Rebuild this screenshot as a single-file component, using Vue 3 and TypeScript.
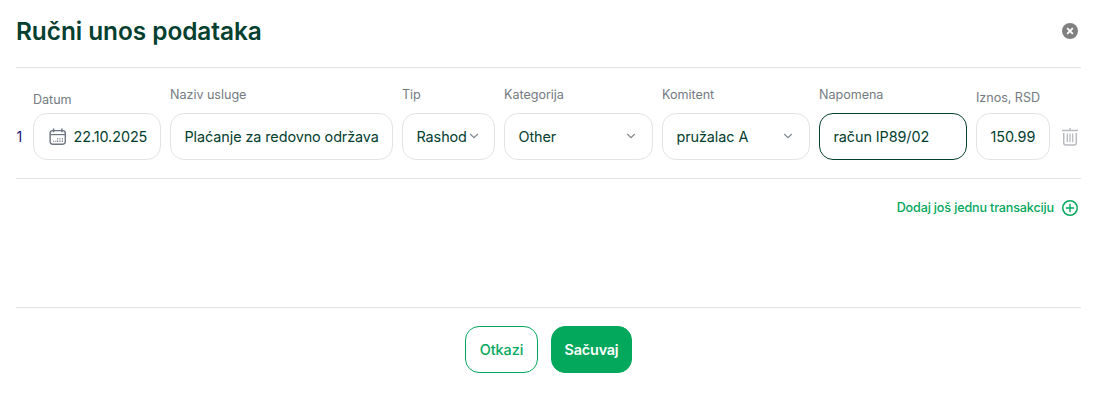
<script setup lang="ts">
import { ref } from 'vue'

type Kind = 'date' | 'text' | 'select'

interface Field {
  key: string
  label: string
  value: string
  kind: Kind
  focused?: boolean
}

const fields = ref<Field[]>([
  { key: 'date', label: 'Datum', value: '22.10.2025', kind: 'date' },
  { key: 'service', label: 'Naziv usluge', value: 'Plaćanje za redovno održava', kind: 'text' },
  { key: 'type', label: 'Tip', value: 'Rashod', kind: 'select' },
  { key: 'category', label: 'Kategorija', value: 'Other', kind: 'select' },
  { key: 'client', label: 'Komitent', value: 'pružalac A', kind: 'select' },
  { key: 'note', label: 'Napomena', value: 'račun IP89/02', kind: 'text', focused: true },
  { key: 'amount', label: 'Iznos, RSD', value: '150.99', kind: 'text' },
])
</script>

<template>
  <main class="dialog">
    <header class="header">
      <h1 class="title">Ručni unos podataka</h1>
      <button class="icon-btn close" type="button" aria-label="Zatvori">
        <svg width="16" height="16" viewBox="0 0 16 16">
          <circle cx="8" cy="8" r="8" fill="#808080" />
          <path d="M5.2 5.2l5.6 5.6M10.8 5.2l-5.6 5.6" stroke="#fff" stroke-width="1.9" />
        </svg>
      </button>
    </header>

    <section class="row">
      <span class="index">1</span>
      <div v-for="f in fields" :key="f.key" class="field" :class="f.key">
        <span class="label">{{ f.label }}</span>
        <div class="control" :class="{ focused: f.focused }">
          <svg v-if="f.kind === 'date'" class="calendar" width="18" height="18" viewBox="0 0 18 18" fill="none" stroke="#6d7580">
            <rect x="1.1" y="2.6" width="15.2" height="13.6" rx="2.6" stroke-width="1.4" />
            <path d="M1.5 6.6H16" stroke-width="1.2" />
            <path d="M4.6.6v3.6M12.9.6v3.6" stroke-width="1.5" />
            <path d="M4 13.2h1.2M6.3 13.2h1.2M8.7 10.3v1.3M8.7 12.6v1.3M11 10.3v1.3M11 12.6v1.3M13.4 10.3v1.3M13.4 12.6v1.3" stroke-width="1.1" />
          </svg>
          <span class="value">{{ f.value }}</span>
          <svg v-if="f.kind === 'select'" class="chevron" width="10" height="6" viewBox="0 0 10 6" fill="none" stroke="#7d858d">
            <path d="M1.2 1l3.8 3.7L8.8 1" stroke-width="1.1" />
          </svg>
        </div>
      </div>
      <button class="icon-btn trash" type="button" aria-label="Obriši">
        <svg width="16" height="18" viewBox="0 0 16 18" fill="none" stroke="#b9babf">
          <path d="M0 2.5h16M8 0v2.5" stroke-width="1.4" />
          <path d="M1.7 5v9.7q0 2.3 2.3 2.3h8q2.3 0 2.3-2.3V5" stroke-width="1.5" />
          <path d="M5.3 5.4v8.8M8 5.4v8.8M10.7 5.4v8.8" stroke-width="1.3" />
        </svg>
      </button>
    </section>

    <section class="extra">
      <button class="add" type="button">
        <span>Dodaj još jednu transakciju</span>
        <svg width="16" height="16" viewBox="0 0 16 16" fill="none" stroke="#04a85d">
          <circle cx="8" cy="8" r="7.25" stroke-width="1.5" />
          <path d="M8 3.8v8.4M3.8 8h8.4" stroke-width="1.4" />
        </svg>
      </button>
    </section>

    <footer class="footer">
      <button class="btn cancel" type="button">Otkazi</button>
      <button class="btn save" type="button">Sačuvaj</button>
    </footer>
  </main>
</template>

<style>
body {
  margin: 0;
  background: #fff;
}
</style>

<style scoped>
.dialog {
  box-sizing: border-box;
  height: 406px;
  padding: 0 17px 0 16px;
  overflow: hidden;
  font-family: Inter, "Liberation Sans", sans-serif;
  color: #04402f;
}
button {
  font-family: inherit;
  margin: 0;
}
.header {
  box-sizing: border-box;
  height: 68px;
  display: flex;
  align-items: center;
  justify-content: space-between;
  padding: 0 3px 6px 0;
  border-bottom: 1px solid #e2e3e4;
}
.title {
  margin: 0;
  font-size: 24.4px;
  line-height: 30px;
  font-weight: 600;
  letter-spacing: -0.05px;
}
.icon-btn {
  display: block;
  padding: 0;
  border: 0;
  background: none;
}
.icon-btn svg {
  display: block;
}
.row {
  box-sizing: border-box;
  height: 111px;
  display: flex;
  align-items: flex-end;
  gap: 9px;
  padding-bottom: 18px;
  border-bottom: 1px solid #e2e3e4;
}
.index {
  width: 8px;
  font-size: 14px;
  line-height: 47px;
  text-indent: 0.5px;
  color: #1a0f78;
}
.field {
  display: flex;
  flex-direction: column;
  flex: none;
}
.label {
  font-size: 12.6px;
  line-height: 16px;
  letter-spacing: -0.04px;
  margin-bottom: 10px;
  color: #757b82;
  white-space: nowrap;
}
.control {
  box-sizing: border-box;
  height: 47px;
  display: flex;
  align-items: center;
  border: 1px solid #e2e3e4;
  border-radius: 14px;
  padding: 0 13px 0 13.5px;
  font-size: 14.4px;
  line-height: 20px;
  letter-spacing: -0.08px;
  white-space: nowrap;
}
.control.focused {
  border-color: #04402f;
}
.calendar {
  flex: none;
  margin: 0 6.5px 0 1.5px;
}
.value {
  flex: none;
}
.chevron {
  flex: none;
  margin: 0 2px 2px auto;
}
.date { width: 128px; }
.date .label { margin-bottom: 5px; }
.service { width: 223px; }
.type { width: 93px; }
.category { width: 149px; }
.category .chevron,
.client .chevron { margin-right: 3px; }
.client { width: 148px; }
.note { width: 148px; }
.amount { width: 74px; }
.amount .label { margin-bottom: 7px; }
.trash {
  margin: 0 0 14px 3px;
}
.extra {
  box-sizing: border-box;
  height: 128px;
  display: flex;
  justify-content: flex-end;
  align-items: flex-start;
  padding: 20px 3px 0 0;
}
.add {
  display: flex;
  align-items: center;
  gap: 8px;
  padding: 0;
  border: 0;
  background: none;
  color: #04a85d;
  font-size: 12.6px;
  line-height: 18px;
  font-weight: 500;
  letter-spacing: -0.16px;
}
.footer {
  display: flex;
  justify-content: center;
  gap: 13px;
  padding-top: 18px;
  border-top: 1px solid #e2e3e4;
}
.btn {
  box-sizing: border-box;
  height: 47px;
  padding: 0;
  border: 1px solid #04a85d;
  border-radius: 14px;
  font-size: 14.4px;
  font-weight: 500;
  letter-spacing: -0.05px;
}
.cancel {
  width: 73px;
  background: #fff;
  color: #04a85d;
}
.save {
  width: 81px;
  background: #04a85d;
  color: #fff;
  font-weight: 600;
  letter-spacing: -0.18px;
}
</style>
